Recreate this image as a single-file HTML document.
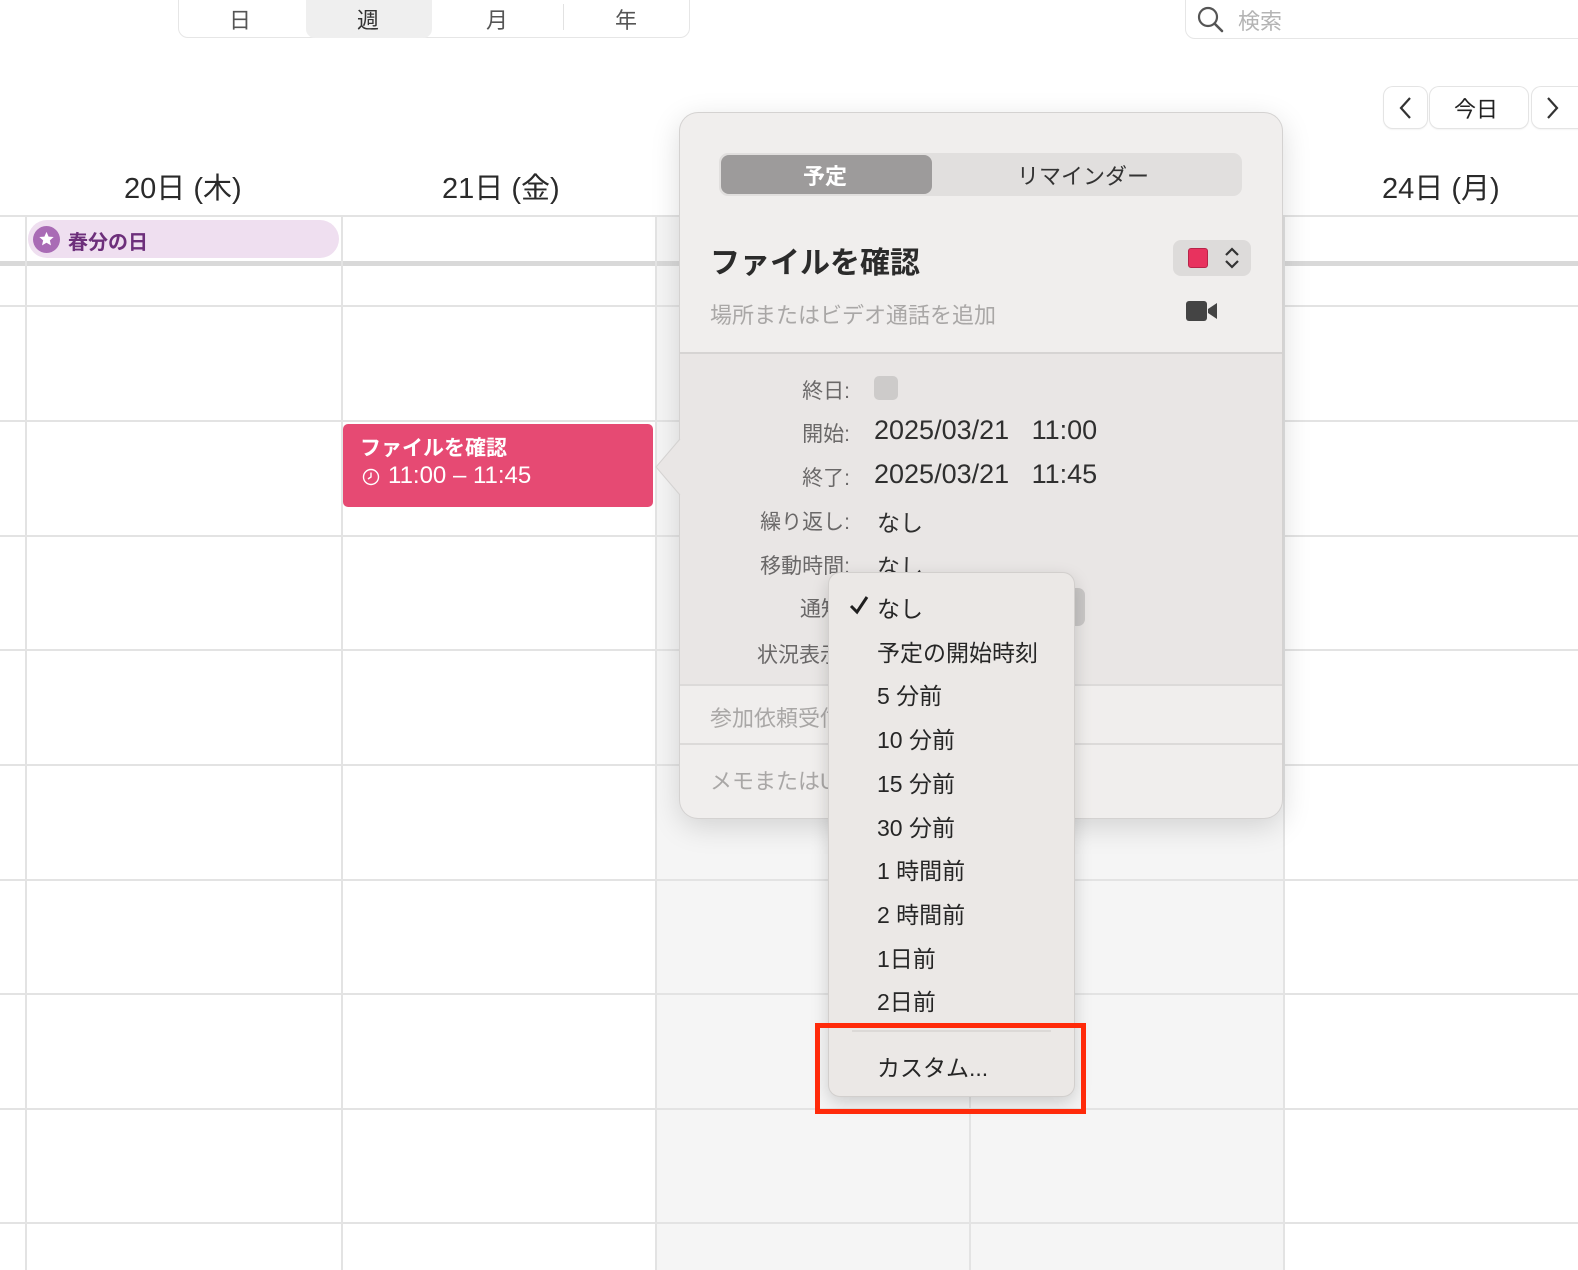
<!DOCTYPE html>
<html><head><meta charset="utf-8"><style>
*{margin:0;padding:0;box-sizing:border-box}
body{width:1578px;height:1270px;overflow:hidden;background:#fff;position:relative;font-family:"Liberation Sans","Noto Sans CJK JP",sans-serif;color:#2a2a2a}
.a{position:absolute}
.hl{position:absolute;left:0;width:1578px;height:2px;background:#e3e3e3}
.vl{position:absolute;top:216px;width:2px;height:1054px;background:#e3e3e3}
.t{position:absolute;white-space:nowrap}
.lab{position:absolute;right:728px;color:#6a6868;font-size:21px;white-space:nowrap}
.mi{position:absolute;left:877px;font-size:23px;color:#262626;white-space:nowrap}
</style></head><body>
<div class="a" style="left:656px;top:216px;width:628px;height:1054px;background:#f5f5f5"></div>
<div class="a" style="left:178px;top:-10px;width:512px;height:48px;border:1px solid #e6e6e6;border-radius:10px;background:#fff"></div>
<div class="a" style="left:306px;top:-10px;width:126px;height:48px;border-radius:9px;background:#efefef"></div>
<div class="a" style="left:563px;top:4px;width:1px;height:26px;background:#e2e2e2"></div>
<div class="t" style="left:229px;top:3px;font-size:22px;color:#555">日</div>
<div class="t" style="left:357px;top:3px;font-size:22px;color:#333">週</div>
<div class="t" style="left:486px;top:3px;font-size:22px;color:#555">月</div>
<div class="t" style="left:615px;top:3px;font-size:22px;color:#555">年</div>
<div class="a" style="left:1185px;top:-10px;width:420px;height:49px;border:1px solid #e6e6e6;border-radius:10px"></div>
<svg class="a" style="left:1196px;top:5px" width="30" height="30" viewBox="0 0 30 30"><circle cx="12" cy="12" r="9" fill="none" stroke="#555" stroke-width="2.2"/><path d="M18.5 18.5L26 26" stroke="#555" stroke-width="2.6" stroke-linecap="round"/></svg>
<div class="t" style="left:1238px;top:4px;font-size:22px;color:#b4b4b4">検索</div>
<div class="a" style="left:1384px;top:87px;width:43px;height:41px;border-radius:9px;background:#fff;box-shadow:0 0 0 1px #e4e4e4,0 1px 2px rgba(0,0,0,.12)"></div>
<div class="a" style="left:1430px;top:87px;width:98px;height:41px;border-radius:9px;background:#fff;box-shadow:0 0 0 1px #e4e4e4,0 1px 2px rgba(0,0,0,.12)"></div>
<div class="a" style="left:1532px;top:87px;width:60px;height:41px;border-radius:9px;background:#fff;box-shadow:0 0 0 1px #e4e4e4,0 1px 2px rgba(0,0,0,.12)"></div>
<svg class="a" style="left:1396px;top:95px" width="20" height="26"><path d="M14 3L5 13L14 23" fill="none" stroke="#333" stroke-width="2.2"/></svg>
<svg class="a" style="left:1543px;top:95px" width="20" height="26"><path d="M5 3L14 13L5 23" fill="none" stroke="#333" stroke-width="2.2"/></svg>
<div class="t" style="left:1454px;top:92px;font-size:22px;color:#222">今日</div>
<div class="t" style="left:124px;top:165px;font-size:29px;color:#2a2a2a">20日 (木)</div>
<div class="t" style="left:442px;top:165px;font-size:29px;color:#2a2a2a">21日 (金)</div>
<div class="t" style="left:1382px;top:165px;font-size:29px;color:#2a2a2a">24日 (月)</div>
<div class="hl" style="top:215px"></div>
<div class="a" style="left:0;top:261px;width:1578px;height:5px;background:#d9d9d9"></div>
<div class="hl" style="top:305px"></div>
<div class="hl" style="top:420px"></div>
<div class="hl" style="top:535px"></div>
<div class="hl" style="top:649px"></div>
<div class="hl" style="top:764px"></div>
<div class="hl" style="top:879px"></div>
<div class="hl" style="top:993px"></div>
<div class="hl" style="top:1108px"></div>
<div class="hl" style="top:1222px"></div>
<div class="vl" style="left:25px"></div>
<div class="vl" style="left:341px"></div>
<div class="vl" style="left:655px"></div>
<div class="vl" style="left:969px"></div>
<div class="vl" style="left:1283px"></div>
<div class="a" style="left:28px;top:220px;width:311px;height:38px;border-radius:19px;background:#efdff0"></div>
<div class="a" style="left:33px;top:226px;width:27px;height:27px;border-radius:50%;background:#a96bb5"></div>
<svg class="a" style="left:35px;top:228px" width="23" height="23" viewBox="0 0 24 24"><path d="M12 4l2.2 5 5.3.4-4 3.5 1.2 5.2L12 15.4 7.3 18.1l1.2-5.2-4-3.5 5.3-.4z" fill="#fff"/></svg>
<div class="t" style="left:68px;top:226px;font-size:20px;font-weight:bold;color:#6d2f7b">春分の日</div>
<div class="a" style="left:343px;top:424px;width:310px;height:83px;border-radius:5px;background:#e64a73"></div>
<div class="t" style="left:360px;top:432px;font-size:21px;font-weight:bold;color:#fff">ファイルを確認</div>
<svg class="a" style="left:362px;top:468px" width="18" height="18"><circle cx="9" cy="9" r="7.5" fill="none" stroke="#fff" stroke-width="1.4"/><path d="M9 4.5V9L6 11" fill="none" stroke="#fff" stroke-width="1.4"/></svg>
<div class="t" style="left:388px;top:462px;font-size:24px;color:#fff">11:00 – 11:45</div>
<div class="a" style="left:680px;top:113px;width:602px;height:705px;border-radius:18px;background:#f0eeed;box-shadow:0 0 0 1px #d4d2d1,0 8px 30px rgba(0,0,0,.15);overflow:hidden">
  <div class="a" style="left:0;top:239px;width:602px;height:334px;background:#e9e6e5;border-top:2px solid #d6d4d3;border-bottom:2px solid #dcdad9"></div>
  <div class="a" style="left:0;top:630px;width:602px;height:2px;background:#dcdad9"></div>
</div>
<svg class="a" style="left:652px;top:435px" width="32" height="64"><path d="M30 0 L30 64 L27 58 L4 32 L27 6 Z" fill="#e9e6e5"/><path d="M28 4 L4 32 L28 60" fill="none" stroke="#d4d2d1" stroke-width="1"/></svg>
<div class="a" style="left:719px;top:153px;width:523px;height:43px;border-radius:9px;background:#e1dfde"></div>
<div class="a" style="left:721px;top:155px;width:211px;height:39px;border-radius:8px;background:#9d9b9b"></div>
<div class="t" style="left:803px;top:159px;font-size:22px;font-weight:bold;color:#fff">予定</div>
<div class="t" style="left:1017px;top:159px;font-size:22px;color:#333">リマインダー</div>
<div class="t" style="left:710px;top:238px;font-size:30px;font-weight:bold;color:#2b2b2b">ファイルを確認</div>
<div class="a" style="left:1173px;top:240px;width:78px;height:36px;border-radius:8px;background:#dddbda"></div>
<div class="a" style="left:1188px;top:248px;width:20px;height:20px;border-radius:3px;background:#e8325e;border:1px solid #b82449"></div>
<svg class="a" style="left:1222px;top:245px" width="20" height="26"><path d="M4 10L10 4L16 10M4 16L10 22L16 16" fill="none" stroke="#333" stroke-width="2.2"/></svg>
<div class="t" style="left:710px;top:298px;font-size:22px;color:#a9a7a6">場所またはビデオ通話を追加</div>
<svg class="a" style="left:1186px;top:300px" width="32" height="22"><rect x="0" y="1" width="21" height="20" rx="3" fill="#444"/><path d="M22 9L31 3V19L22 13Z" fill="#444"/></svg>
<div class="lab" style="top:375px">終日:</div>
<div class="a" style="left:874px;top:376px;width:24px;height:24px;border-radius:5px;background:#cdcbca"></div>
<div class="lab" style="top:418px">開始:</div>
<div class="t" style="left:874px;top:415px;font-size:27px;color:#2f2f2f">2025/03/21&nbsp;&nbsp;&nbsp;11:00</div>
<div class="lab" style="top:462px">終了:</div>
<div class="t" style="left:874px;top:459px;font-size:27px;color:#2f2f2f">2025/03/21&nbsp;&nbsp;&nbsp;11:45</div>
<div class="lab" style="top:506px">繰り返し:</div>
<div class="t" style="left:877px;top:504px;font-size:23px;color:#2f2f2f">なし</div>
<div class="lab" style="top:550px">移動時間:</div>
<div class="t" style="left:877px;top:548px;font-size:23px;color:#2f2f2f">なし</div>
<div class="t" style="left:800px;top:593px;font-size:21px;color:#6a6868">通知:</div>
<div class="t" style="left:757px;top:639px;font-size:21px;color:#6a6868">状況表示:</div>
<div class="a" style="left:1050px;top:588px;width:35px;height:38px;border-radius:7px;background:#c9c7c6"></div>
<div class="t" style="left:710px;top:701px;font-size:22px;color:#a9a7a6">参加依頼受信者を追加</div>
<div class="t" style="left:710px;top:764px;font-size:22px;color:#a9a7a6">メモまたはURLを追加</div>
<div class="a" style="left:829px;top:573px;width:245px;height:523px;border-radius:11px;background:#ebe8e6;box-shadow:0 0 0 1px #d2cfcd,0 6px 18px rgba(0,0,0,.18)"></div>
<div class="a" style="left:852px;top:1030px;width:199px;height:2px;background:#dcd9d7"></div>
<svg class="a" style="left:848px;top:594px" width="22" height="22"><path d="M3 12L9 18L19 3" fill="none" stroke="#1f1f1f" stroke-width="3"/></svg>
<div class="mi" style="top:590px">なし</div>
<div class="mi" style="top:634px">予定の開始時刻</div>
<div class="mi" style="top:677px">5 分前</div>
<div class="mi" style="top:721px">10 分前</div>
<div class="mi" style="top:765px">15 分前</div>
<div class="mi" style="top:809px">30 分前</div>
<div class="mi" style="top:852px">1 時間前</div>
<div class="mi" style="top:896px">2 時間前</div>
<div class="mi" style="top:940px">1日前</div>
<div class="mi" style="top:983px">2日前</div>
<div class="mi" style="top:1049px">カスタム...</div>
<div class="a" style="left:815px;top:1023px;width:271px;height:91px;border:5px solid #ff2a0a"></div>
</body></html>
